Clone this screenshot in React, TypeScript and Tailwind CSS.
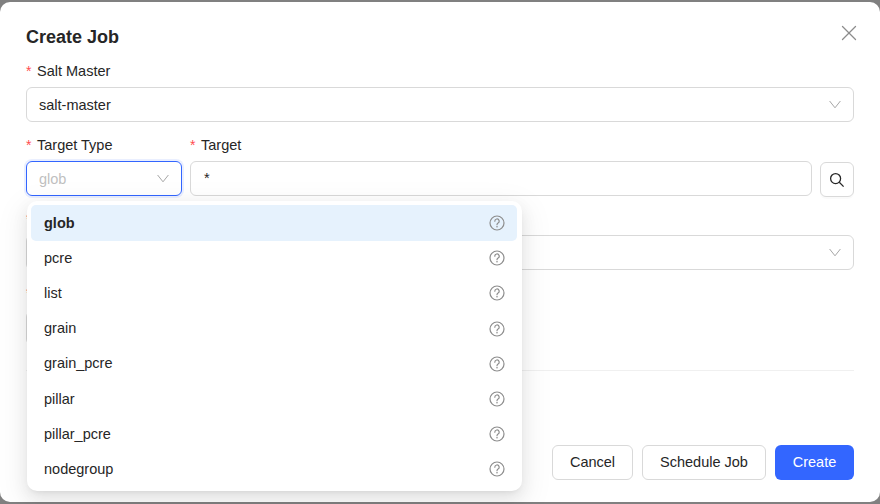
import React from "react"
import { X } from "lucide-react"

const options = ["glob", "pcre", "list", "grain", "grain_pcre", "pillar", "pillar_pcre", "nodegroup"]

function Label({ text }: { text?: string }) {
  return (
    <div className="flex items-center h-[22px] text-[14.5px] leading-[22px] text-[#262626]">
      <span className="text-[#ff4d4f] w-[11px] text-[14px]">*</span>
      {text}
    </div>
  )
}

function Chevron() {
  return (
    <svg width="12" height="9" viewBox="0 0 12 9" fill="none" className="text-[#a6a6a6]">
      <path d="M.6 1 6 7.8 11.4 1" stroke="currentColor" strokeWidth="1" />
    </svg>
  )
}

function Help() {
  return (
    <svg width="16" height="16" viewBox="0 0 16 16" fill="none" className="text-[#8c8c8c]">
      <circle cx="8" cy="8" r="7" stroke="currentColor" strokeWidth="1.2" />
      <path d="M5.8 6.2a2.2 2.2 0 1 1 3.3 1.9c-.7.4-1.1.7-1.1 1.6" stroke="currentColor" strokeWidth="1.2" strokeLinecap="round" />
      <circle cx="8" cy="11.7" r=".8" fill="currentColor" />
    </svg>
  )
}

export default function App() {
  return (
    <div className="h-[504px] w-[880px] overflow-hidden bg-[#808080] py-[2px] font-['Liberation_Sans',sans-serif]">
      <div className="relative h-[500px] rounded-[10px] bg-white px-[26px] pt-[24px]">
        <X className="absolute right-[18px] top-[17.5px] text-[#8c8c8c]" size={26} strokeWidth={1.15} />
        <h1 className="text-[18px] font-bold leading-[22px] text-[#262626]">Create Job</h1>

        <div className="mt-[12px]">
          <Label text="Salt Master" />
        </div>
        <div className="mt-[5px] flex h-[35px] items-center justify-between rounded-[6px] border border-[#d9d9d9] px-[12px] text-[14.5px] text-[#262626]">
          <span className="pt-[2px]">salt-master</span>
          <Chevron />
        </div>

        <div className="mt-[12px] flex gap-[8px]">
          <div className="w-[156px]">
            <Label text="Target Type" />
            <div className="mt-[5px] flex h-[35px] items-center justify-between rounded-[6px] border border-[#3366ff] px-[12px] text-[14.5px] text-[#bfbfbf] shadow-[0_0_0_2px_rgba(51,102,255,0.1)]">
              <span className="pt-[2px]">glob</span>
              <Chevron />
            </div>
          </div>
          <div className="flex-1">
            <Label text="Target" />
            <div className="mt-[5px] flex items-start gap-[8px]">
              <div className="flex h-[35px] flex-1 items-center rounded-[6px] border border-[#d9d9d9] pl-[13px] text-[14.5px] text-[#262626]">
                *
              </div>
              <button className="mt-[1px] -mb-[1px] flex h-[35px] w-[34px] items-center justify-center rounded-[6px] border border-[#d9d9d9] bg-white text-[#262626] shadow-[0_2px_0_rgba(0,0,0,0.02)]">
                <svg width="16" height="16" viewBox="0 0 16 16" fill="none">
                  <circle cx="6.6" cy="6.6" r="5" stroke="currentColor" strokeWidth="1.3" />
                  <path d="M10.3 10.3 14.6 14.6" stroke="currentColor" strokeWidth="1.3" />
                </svg>
              </button>
            </div>
          </div>
        </div>

        <div className="mt-[12px]">
          <Label />
        </div>
        <div className="mt-[5px] flex h-[35px] items-center justify-end rounded-[6px] border border-[#d9d9d9] pr-[12px]">
          <Chevron />
        </div>

        <div className="mt-[12px]">
          <Label />
        </div>
        <div className="mt-[7px] h-[34px] w-[100px] rounded-[6px] border border-[#d9d9d9]" />

        <div className="mt-[25px] border-t border-[#f0f0f0]" />

        <div className="mt-[74px] flex justify-end gap-[9px] text-[14.5px]">
          <button className="h-[35px] w-[81px] rounded-[6px] border border-[#d9d9d9] bg-white text-[#262626]">Cancel</button>
          <button className="h-[35px] w-[124px] rounded-[6px] border border-[#d9d9d9] bg-white text-[#262626]">Schedule Job</button>
          <button className="h-[35px] w-[79px] rounded-[6px] bg-[#3366ff] text-white">Create</button>
        </div>

        <div className="absolute left-[27px] top-[199.4px] w-[495px] rounded-[10px] bg-white py-[4px] pl-[4px] pr-[5px] shadow-[0_6px_16px_rgba(0,0,0,0.08),0_3px_6px_-4px_rgba(0,0,0,0.12),0_9px_28px_8px_rgba(0,0,0,0.05)]">
          {options.map((o, i) => (
            <div
              key={o}
              className={`flex h-[35.2px] items-center justify-between rounded-[5px] pl-[13px] pr-[12.5px] text-[14.5px] text-[#262626] ${
                i === 0 ? "bg-[#e6f2fd] font-bold" : ""
              }`}
            >
              <span className="pt-[1px]">{o}</span>
              <Help />
            </div>
          ))}
        </div>
      </div>
    </div>
  )
}
